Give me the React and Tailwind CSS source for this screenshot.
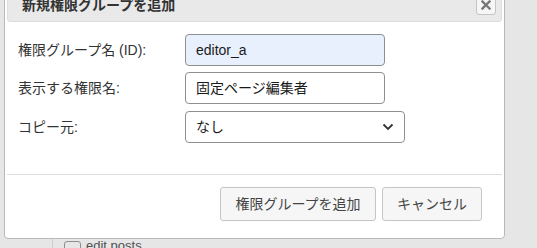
import React from "react";

const font = { fontFamily: '"Liberation Sans", "Noto Sans CJK JP", sans-serif' };

export default function App() {
  return (
    <div
      className="relative w-[537px] h-[248px] overflow-hidden bg-[#e6e6e6]"
      style={font}
    >
      {/* page content behind the dialog */}
      <div className="absolute left-0 top-[239px] w-full h-[20px] flex items-start">
        <div className="ml-[52px] w-px h-[20px] bg-[#cfcfcf]" />
        <div className="ml-[11px] mt-[2px] w-[17px] h-[17px] border border-[#8c8f94] rounded-[3px] bg-[#e6e6e6]" />
        <span className="ml-[5px] -mt-[1px] text-[13px] leading-[16px] text-[#505050]">edit posts</span>
      </div>

      {/* dialog */}
      <div className="relative ml-[4px] -mt-[20px] w-[501px] h-[259px] bg-white border border-[#b9b9b9] rounded-[4px] p-[2px] flex flex-col">
        <div className="h-[39px] flex items-start justify-between bg-[#e9e9e9] border border-[#dddddd] rounded-[3px] pl-[14px] pr-[5px]">
          <span className="mt-[11px] text-[14px] leading-[20px] font-bold text-[#333333]">
            新規権限グループを追加
          </span>
          <button className="mt-[11px] w-[20px] h-[20px] flex items-center justify-center bg-[#f6f6f6] border border-[#c5c5c5] rounded-[3px]">
            <svg width="10" height="10" viewBox="0 0 10 10">
              <path d="M1.5 1.5 L8.5 8.5 M8.5 1.5 L1.5 8.5" stroke="#777777" strokeWidth="2.4" strokeLinecap="square" />
            </svg>
          </button>
        </div>

        <div className="pl-[11px] pt-[12px] flex flex-col text-[14px] text-[#333333]">
          <div className="flex items-center h-[32px]">
            <span className="w-[167px]">権限グループ名 (ID):</span>
            <div className="w-[200px] h-[32px] flex items-center pl-[10px] bg-[#e8f0fe] border border-[#8f8f8f] rounded-[4px] text-[#1a1a1a]">
              editor_a
            </div>
          </div>
          <div className="flex items-center h-[32px] mt-[6px]">
            <span className="w-[167px]">表示する権限名:</span>
            <div className="w-[200px] h-[32px] flex items-center pl-[10px] bg-white border border-[#8f8f8f] rounded-[4px] text-[#1a1a1a]">
              固定ページ編集者
            </div>
          </div>
          <div className="flex items-center h-[32px] mt-[7px]">
            <span className="w-[167px]">コピー元:</span>
            <div className="w-[220px] h-[32px] flex items-center justify-between pl-[10px] pr-[10px] bg-white border border-[#8f8f8f] rounded-[4px] text-[#1a1a1a]">
              <span>なし</span>
              <svg width="12" height="8" viewBox="0 0 12 8">
                <path d="M1.5 1.5 L6 6 L10.5 1.5" fill="none" stroke="#333333" strokeWidth="1.8" />
              </svg>
            </div>
          </div>
        </div>

        <div className="mt-[31px] h-px bg-[#dddddd]" />

        <div className="mt-[12px] flex justify-end gap-[6px] pr-[20px]">
          <button className="w-[156px] h-[34px] bg-[#f6f6f6] border border-[#c5c5c5] rounded-[3px] text-[14px] text-[#454545]">
            権限グループを追加
          </button>
          <button className="w-[100px] h-[34px] bg-[#f6f6f6] border border-[#c5c5c5] rounded-[3px] text-[14px] text-[#454545]">
            キャンセル
          </button>
        </div>
      </div>
    </div>
  );
}
